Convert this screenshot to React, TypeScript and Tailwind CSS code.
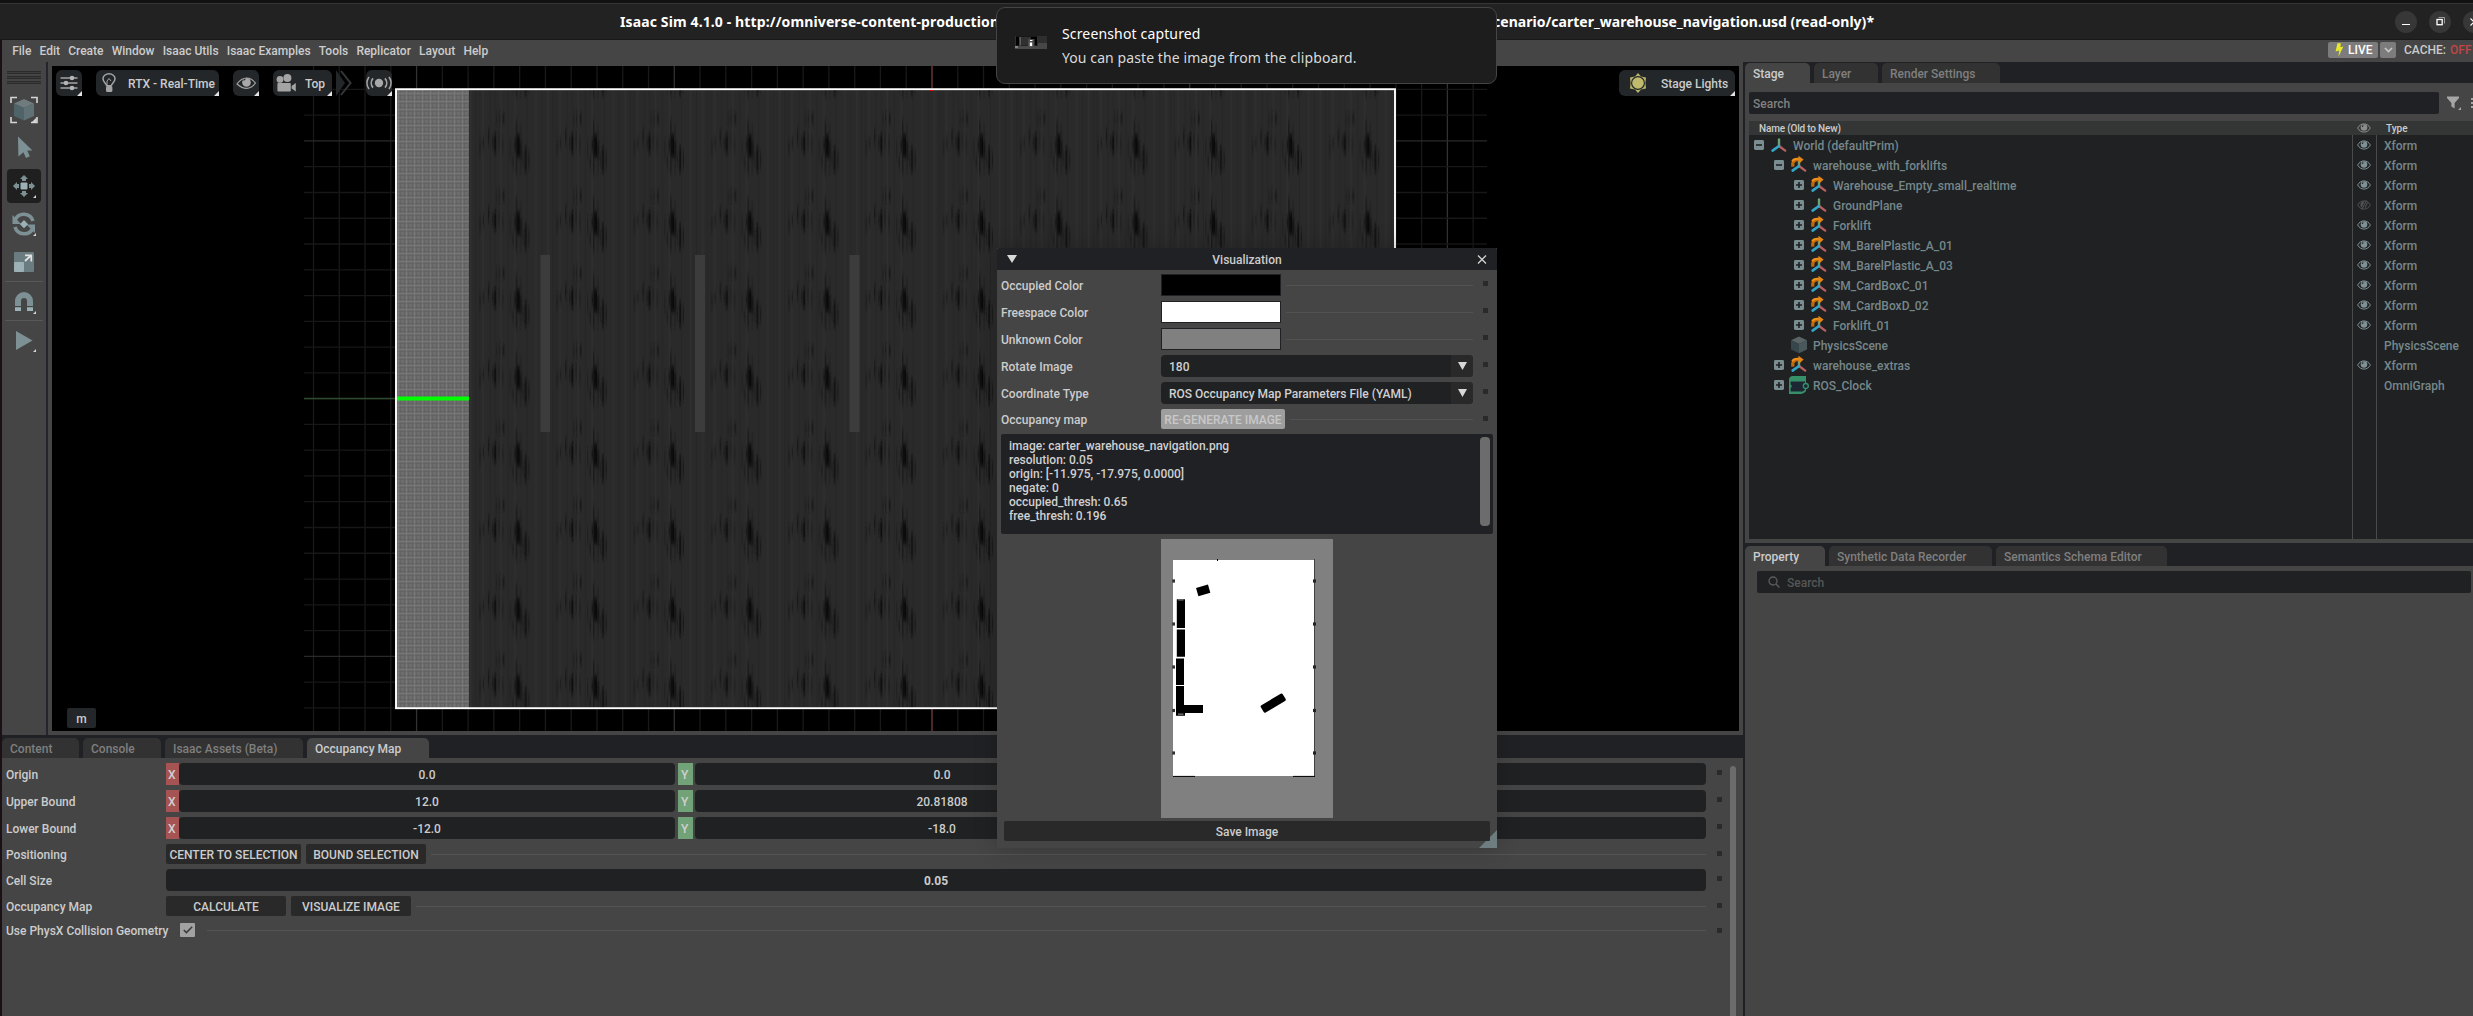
import type { ReactNode } from 'react';

/* ---------- shared bits ---------- */

const Corner = ({ className = '' }: { className?: string }) => (
  <svg className={`absolute right-0 bottom-0 ${className}`} width="5" height="5" viewBox="0 0 5 5">
    <path d="M5 0V5H0Z" fill="#e4e4e4" />
  </svg>
);

const Tab = ({ children, className, active }: { children: ReactNode; className: string; active?: boolean }) => (
  <div
    className={`flex shrink-0 items-center rounded-t-[5px] pl-2 ${
      active ? 'bg-[#454545] text-[#cccccc]' : 'bg-[#323232] text-[#7f7f7f]'
    } ${className}`}
  >
    {children}
  </div>
);

const Marker = () => <div className="size-[5px] shrink-0 bg-[#2a2a2a]" />;

const Eye = ({ color = '#7f9194' }: { color?: string }) => (
  <svg width="14" height="10" viewBox="0 0 14 10" fill="none">
    <path d="M0.6 5C2.3 2.2 4.4 0.9 7 0.9S11.7 2.2 13.4 5C11.7 7.8 9.6 9.1 7 9.1S2.3 7.8 0.6 5Z" stroke={color} strokeWidth="1" />
    <circle cx="7" cy="4.5" r="3.3" fill={color} />
    <path d="M6.4 2.4A2 2 0 0 0 5.2 4" stroke="#26292b" strokeWidth="1.1" />
  </svg>
);

const EyeOff = () => (
  <svg width="14" height="10" viewBox="0 0 14 10" fill="none">
    <path d="M0.6 5C2.3 2.2 4.4 0.9 7 0.9S11.7 2.2 13.4 5C11.7 7.8 9.6 9.1 7 9.1S2.3 7.8 0.6 5Z" stroke="#525252" strokeWidth="1" />
    <path d="M7.6 1.2A3.6 3.6 0 0 0 4.6 7.4Z" fill="#525252" />
    <path d="M9.6 0.4L4.6 9.6M10.6 2.6L8 7.8" stroke="#525252" strokeWidth="1.1" />
  </svg>
);

/* ---------- title bar ---------- */

const WindowButton = ({ children }: { children: ReactNode }) => (
  <div className="flex size-[22px] shrink-0 items-center justify-center rounded-full bg-[#373737]">{children}</div>
);

function TitleBar() {
  return (
    <div className="flex h-[40px] shrink-0 flex-col bg-[#222222]">
      <div className="h-[3px] bg-[#111111]" />
      <div className="h-px bg-[#363636]" />
      <div className="flex h-[35px] items-center overflow-hidden">
        <div className="ml-[620px] flex w-[1254px] shrink-0 justify-between text-[14px] leading-[20px] font-bold whitespace-nowrap text-white [font-family:'Noto_Sans',sans-serif]">
          <span className="tracking-[0.12px]">Isaac Sim 4.1.0 - http://omniverse-content-production</span>
          <span className="tracking-[0.02px]">cenario/carter_warehouse_navigation.usd (read-only)*</span>
        </div>
        <div className="ml-[521px] flex gap-3">
          <WindowButton>
            <div className="mt-[5px] h-px w-2 bg-white" />
          </WindowButton>
          <WindowButton>
            <svg width="9" height="9" viewBox="0 0 9 9" fill="none">
              <path d="M2.5 0.5H8.5V6.5" stroke="#9a9a9a" />
              <rect x="1" y="2.5" width="5.2" height="5.2" stroke="#fff" strokeWidth="1.3" />
            </svg>
          </WindowButton>
          <WindowButton>
            <svg width="8" height="8" viewBox="0 0 8 8">
              <path d="M0.5 0.5L7.5 7.5M7.5 0.5L0.5 7.5" stroke="#fff" strokeWidth="1.2" />
            </svg>
          </WindowButton>
        </div>
      </div>
      <div className="h-px bg-[#191919]" />
    </div>
  );
}

const MENUS = ['File', 'Edit', 'Create', 'Window', 'Isaac Utils', 'Isaac Examples', 'Tools', 'Replicator', 'Layout', 'Help'];

function MenuBar() {
  return (
    <div className="flex h-[22px] shrink-0 items-center justify-between bg-[#454545]">
      <div className="flex gap-[8.2px] pl-[10.2px]">
        {MENUS.map((m) => (
          <span key={m}>{m}</span>
        ))}
      </div>
      <div className="flex h-full w-[145px] shrink-0 items-start pt-[2px] leading-[17px] whitespace-nowrap">
        <div className="flex h-4 w-[50px] items-center rounded-[2px] bg-[#7c7c7c] pl-[7px] text-white">
          <svg width="9" height="14" viewBox="0 0 9 14">
            <path d="M2.4 0.3H5.8L5.4 4.2L8.4 3.6L3.4 13.8L4.2 7.6L0.6 8.4Z" fill="#e8e82a" />
          </svg>
          <span className="pl-[4px]">LIVE</span>
        </div>
        <div className="ml-[2px] flex h-4 w-4 items-center justify-center rounded-[2px] bg-[#7c7c7c]">
          <svg width="9" height="6" viewBox="0 0 9 6" fill="none">
            <path d="M1 1L4.5 4.6L8 1" stroke="#c8c8c8" strokeWidth="1.6" />
          </svg>
        </div>
        <span className="ml-2">CACHE:</span>
        <span className="ml-[4px] text-[#c04545]">OFF</span>
      </div>
    </div>
  );
}

/* ---------- tool strip ---------- */

const Tool = ({ children, className = '', active }: { children: ReactNode; className?: string; active?: boolean }) => (
  <div className={`size-[34px] shrink-0 ${active ? 'rounded-[4px] bg-[#1f1f1f]' : ''} ${className}`}>
    <svg width="34" height="34" viewBox="0 0 34 34" fill="none">
      {children}
    </svg>
  </div>
);

const tip = 'M29 26V29H26Z';

function ToolStrip() {
  return (
    <div className="flex w-[44px] shrink-0 flex-col items-center bg-[#454545] pt-[9px]">
      <div className="flex h-[13px] w-[34px] flex-col justify-between">
        <div className="h-[3px] border-y border-y-[#2b2b2b] bg-[#3c3c3c]" />
        <div className="h-[3px] border-y border-y-[#2b2b2b] bg-[#3c3c3c]" />
        <div className="h-[3px] border-y border-y-[#2b2b2b] bg-[#3c3c3c]" />
      </div>
      <Tool className="mt-[9px]">
        <path d="M4 10V4.5H10M24 4.5H30V10M30 24V29.5H24M10 29.5H4V24" stroke="#d6d6d6" strokeWidth="1.6" />
        <path d="M17 6L27 10.5L17 15L7 10.5Z" fill="#6f7b7d" />
        <path d="M7 10.5L17 15V27.5L7 23Z" fill="#4f6468" />
        <path d="M27 10.5L17 15V27.5L27 23Z" fill="#617277" />
        <path d="M29.5 24.5V29H25Z" fill="#d6d6d6" />
      </Tool>
      <Tool className="mt-[3px]">
        <path d="M11 6.5L25.5 20.5H20.2L22.8 26.2L19 28L16.4 22.2L11.4 26.6Z" fill="#7d9195" />
      </Tool>
      <Tool className="mt-[5px]" active>
        <rect x="13.5" y="13.5" width="7" height="7" rx="1" fill="#9cb1b6" />
        <path
          d="M17 6L21 10H19V12H15V10H13ZM17 28L21 24H19V22H15V24H13ZM6 17L10 13V15H12V19H10V21ZM28 17L24 13V15H22V19H24V21Z"
          fill="#7d9195"
        />
        <path d={tip} fill="#d6d6d6" />
      </Tool>
      <Tool className="mt-1">
        <path d="M8 13A9.6 9.6 0 0 1 26 14M26 21A9.6 9.6 0 0 1 8 20" stroke="#7d9195" strokeWidth="3.6" />
        <path d="M5.5 8V17H14ZM28 26V17.5H19.5Z" fill="#7d9195" />
        <rect x="14.2" y="14.2" width="5.8" height="5.8" transform="rotate(45 17 17)" fill="#9cb1b6" />
        <path d="M29 26V29H26Z" fill="#d6d6d6" />
      </Tool>
      <Tool className="mt-1">
        <rect x="7" y="7" width="20" height="20" rx="1" fill="#6b7c80" />
        <rect x="7" y="17" width="10" height="10" rx="1" fill="#9cb1b6" />
        <path d="M18 10.3H24.3V16.5M24 10.5L18 16" stroke="#e2e2e2" strokeWidth="1.7" />
      </Tool>
      <div className="mt-[2px] h-px w-[38px] bg-[#585858]" />
      <Tool className="mt-[3px]">
        <path d="M8 21V16A9 9 0 0 1 26 16V21H20V16A3 3 0 0 0 14 16V21Z" fill="#7d9195" />
        <path d="M8 22.3H14V26H8ZM20 22.3H26V26H20Z" fill="#9cb1b6" />
        <path d={tip} fill="#d6d6d6" />
      </Tool>
      <div className="mt-px h-px w-[38px] bg-[#585858]" />
      <Tool className="mt-[3px]">
        <path d="M9 7L25.5 16.5L9 26Z" fill="#7d9195" />
        <path d="M29 25V28H26Z" fill="#d6d6d6" />
      </Tool>
    </div>
  );
}

/* ---------- viewport ---------- */

const V0 = 313.5 - 52;
const H0 = 89.4 - 66;
const STEP = 25.77;

/* Coordinates of the scene are local to the viewport. */
function Scene() {
  const vs = Array.from({ length: 46 }, (_, i) => ({ x: V0 + i * STEP, major: i % 10 === 4 }));
  const hs = Array.from({ length: 25 }, (_, i) => ({ y: H0 + i * STEP, major: i % 10 === 2 }));
  return (
    <svg className="absolute inset-0" width="1687" height="665" viewBox="0 0 1687 665">
      <defs>
        <pattern id="weave" width="8" height="8" patternUnits="userSpaceOnUse">
          <rect width="8" height="8" fill="#6d6d6d" />
          <path d="M0.5 0V8M4.5 0V8M0 1.5H8M0 5.5H8" stroke="#636363" strokeWidth="1" />
          <path d="M2.5 0V8M0 3.5H8" stroke="#767676" strokeWidth="1" />
        </pattern>
        <filter id="soft" filterUnits="userSpaceOnUse" x="0" y="0" width="78" height="78">
          <feGaussianBlur stdDeviation="0.5 2.6" />
        </filter>
        <pattern id="floor" x="426" y="36" width="77.25" height="77.3" patternUnits="userSpaceOnUse">
          <rect width="77.25" height="77.3" fill="#2a2a2a" />
          <path d="M5 0V78M23 0V78M37 0V78M58 0V78M70 0V78" stroke="#2f2f2f" strokeWidth="1.5" />
          <path d="M1 0V78M12 0V78M17 0V78M30 0V78M49 0V78M64 0V78M75 0V78" stroke="#252525" strokeWidth="1" />
          <g filter="url(#soft)" fill="none">
            <path d="M38.4 18V72" stroke="#1b1b1b" strokeWidth="1.3" />
            <path d="M42.6 24V70" stroke="#1c1c1c" strokeWidth="1.2" />
            <path d="M40 33V55" stroke="#070707" strokeWidth="2.8" />
            <path d="M37 37V49M43.2 40V56" stroke="#121212" strokeWidth="1.6" />
            <path d="M47.6 45V70" stroke="#0b0b0b" strokeWidth="1.6" />
            <path d="M50.8 50V66M45.2 52V64" stroke="#1b1b1b" strokeWidth="1.2" />
            <path d="M32.5 38V56M35.2 54V66" stroke="#1f1f1f" strokeWidth="1.3" />
            <path d="M17.2 32V51" stroke="#111111" strokeWidth="2.2" />
            <path d="M14.8 36V46" stroke="#181818" strokeWidth="1.6" />
            <path d="M10.6 28V42" stroke="#151515" strokeWidth="1.3" />
            <path d="M21 30V46M24.6 36V50" stroke="#1f1f1f" strokeWidth="1.2" />
            <path d="M25.5 12V21" stroke="#161616" strokeWidth="1.6" />
            <path d="M21.5 10V24M18.6 12V24" stroke="#1f1f1f" strokeWidth="1.2" />
            <path d="M2 38V52M5.5 36V46" stroke="#1e1e1e" strokeWidth="1.3" />
          </g>
          <circle cx="40.2" cy="57.6" r="1.5" fill="#242424" />
        </pattern>
      </defs>
      {vs.map(({ x, major }) => (
        <path key={x} d={`M${x} 0V665`} stroke={major ? '#323232' : '#191919'} strokeWidth="1.3" />
      ))}
      {hs.map(({ y, major }) => (
        <path key={y} d={`M252 ${y}H1435`} stroke={major ? '#2a2a2a' : '#171717'} strokeWidth="1.3" />
      ))}
      <path d="M880 0V665" stroke="#5a2a2a" strokeWidth="1.6" />
      <path d="M252 332.5H1435" stroke="#2c4a2c" strokeWidth="1.6" />
      <rect x="344" y="23" width="73" height="619" fill="url(#weave)" />
      <rect x="417" y="23" width="926" height="619" fill="url(#floor)" />
      <path d="M488.5 189H498V366H488.5ZM643 189H653V366H643ZM797.5 189H807.5V366H797.5Z" fill="#3c3c3c" />
      <path d="M345 332.5H417" stroke="#00ff00" strokeWidth="4" />
      <rect x="344" y="23.2" width="999" height="619" stroke="#ffffff" strokeWidth="1.9" fill="none" />
      <rect x="878" y="24" width="4" height="1" fill="#ff0000" />
    </svg>
  );
}

const ViewButton = ({ children, className }: { children: ReactNode; className: string }) => (
  <div className={`relative flex h-[26px] shrink-0 items-center rounded-[6px] bg-[#23272a] ${className}`}>
    {children}
    <Corner />
  </div>
);

function Viewport() {
  return (
    <div className="relative flex min-w-0 flex-1 flex-col justify-between overflow-hidden bg-black">
      <Scene />
      <div className="relative flex items-start px-1 pt-1">
        <ViewButton className="w-[26px] justify-center">
          <svg width="18" height="16" viewBox="0 0 18 16" fill="none">
            <path d="M0.5 3H17.5M0.5 8H17.5M0.5 13H17.5" stroke="#a4a4a4" strokeWidth="1.7" />
            <circle cx="12" cy="3" r="2.3" fill="#b4b4b4" />
            <circle cx="6" cy="8" r="2.3" fill="#b4b4b4" />
            <circle cx="12" cy="13" r="2.3" fill="#b4b4b4" />
          </svg>
        </ViewButton>
        <ViewButton className="ml-[14px] w-[123px]">
          <svg className="ml-[6px]" width="14" height="20" viewBox="0 0 14 20" fill="none">
            <path d="M4.6 12.8C4.4 10.4 1 9.2 1 5.8A6 5 0 0 1 13 5.8C13 9.2 9.6 10.4 9.4 12.8Z" stroke="#a4a4a4" strokeWidth="1.5" />
            <path d="M5 12V8L7 5.5L9 8" stroke="#a4a4a4" strokeWidth="1" />
            <rect x="4" y="13" width="6.4" height="6" rx="1.6" fill="#a4a4a4" />
          </svg>
          <span className="ml-[12px] pt-[2px] whitespace-nowrap">RTX - Real-Time</span>
        </ViewButton>
        <ViewButton className="ml-[14px] w-[26px] justify-center">
          <svg width="20" height="14" viewBox="0 0 20 14" fill="none">
            <path d="M1 8C4 3.8 7 2 10.5 2C14 2 17 3.8 19.4 7C16.8 10.8 14 12.4 10.5 12.4C6.8 12.4 4 10.6 1 8Z" stroke="#a4a4a4" strokeWidth="1.2" />
            <circle cx="10.5" cy="6.4" r="4.3" fill="#a8a8a8" />
            <path d="M7.6 4.6A3 3 0 0 1 9.4 3" stroke="#23272a" strokeWidth="1.2" />
          </svg>
        </ViewButton>
        <ViewButton className="ml-[14px] w-[59px]">
          <svg className="ml-[2px]" width="22" height="20" viewBox="0 0 22 20">
            <circle cx="5" cy="6.4" r="3.4" fill="#a4a4a4" />
            <circle cx="12.4" cy="5" r="4" fill="#a4a4a4" />
            <rect x="2.4" y="10" width="13.4" height="8.6" rx="1" fill="#a4a4a4" />
            <path d="M20.8 10V18.6L16.6 15.6V13Z" fill="#a4a4a4" />
          </svg>
          <span className="ml-[8px] pt-[2px]">Top</span>
        </ViewButton>
        <svg className="ml-[4px]" width="16" height="26" viewBox="0 0 16 26" fill="none">
          <path d="M0 0L9 13L0 26Z" fill="#23272a" />
          <path d="M5 1L14.5 13L5 25" stroke="#33383b" strokeWidth="2" />
        </svg>
        <ViewButton className="ml-[14px] w-[26px] justify-center">
          <svg width="26" height="16" viewBox="0 0 26 16" fill="none">
            <circle cx="13" cy="8" r="4.2" fill="#a8a8a8" />
            <path d="M7 3.4A7 7 0 0 0 7 12.6M19 3.4A7 7 0 0 1 19 12.6M3 2A10 10 0 0 0 3 14M23 2A10 10 0 0 1 23 14" stroke="#a4a4a4" strokeWidth="1.7" />
          </svg>
        </ViewButton>
        <ViewButton className="ml-auto w-[116px]">
          <svg className="ml-[9px]" width="20" height="20" viewBox="0 0 20 20">
            <path d="M10 0L13 3.4L18 4.6L17.4 10L18 15.4L13 16.6L10 20L7 16.6L2 15.4L2.6 10L2 4.6L7 3.4Z" fill="#b9b56a" />
            <circle cx="10" cy="10" r="7" fill="#23272a" />
            <circle cx="10" cy="10" r="5.8" fill="#bfba6c" />
          </svg>
          <span className="ml-[13px] pt-[2px] whitespace-nowrap">Stage Lights</span>
        </ViewButton>
      </div>
      <div className="relative mb-[3px] ml-[15px] flex h-5 w-[29px] items-center justify-center rounded-[2px] bg-[#23272a] pt-[2px]">m</div>
    </div>
  );
}

/* ---------- bottom panel ---------- */

const Field = ({ children, className = '' }: { children?: ReactNode; className?: string }) => (
  <div className={`flex h-[22px] items-center justify-center rounded-[4px] bg-[#1f2123] pt-[2px] ${className}`}>{children}</div>
);

const Axis = ({ children, className }: { children: ReactNode; className: string }) => (
  <div className={`flex h-[22px] shrink-0 items-center pt-[2px] text-[#d0d0d0] ${className}`}>{children}</div>
);

const BOUNDS = [
  ['Origin', '0.0', '0.0'],
  ['Upper Bound', '12.0', '20.81808'],
  ['Lower Bound', '-12.0', '-18.0'],
];

const Row = ({ label, children, className }: { label: string; children: ReactNode; className: string }) => (
  <div className={`flex shrink-0 items-center ${className}`}>
    <span className="w-[160px] shrink-0 pt-[2px] whitespace-nowrap">{label}</span>
    <div className="flex min-w-0 flex-1 items-center">{children}</div>
    <div className="ml-[11px] self-start pt-[7px]">
      <Marker />
    </div>
  </div>
);

const Button = ({ children, className }: { children: ReactNode; className: string }) => (
  <div className={`flex h-5 shrink-0 items-center justify-center rounded-[2px] bg-[#292929] pt-px whitespace-nowrap ${className}`}>
    {children}
  </div>
);

const Rule = ({ className = '' }: { className?: string }) => <div className={`h-px flex-1 bg-[#515655] ${className}`} />;

function OccupancyPanel() {
  return (
    <div className="flex h-[281px] shrink-0 flex-col bg-[#454545]">
      <div className="flex h-[23px] shrink-0 gap-1 bg-[#202124] pt-[3px]">
        <Tab className="w-[77px] pt-[2px]">Content</Tab>
        <Tab className="w-[78px] pt-[2px]">Console</Tab>
        <Tab className="w-[138px] pt-[2px]">Isaac Assets (Beta)</Tab>
        <Tab className="w-[122px] pt-[2px]" active>
          Occupancy Map
        </Tab>
      </div>
      <div className="flex min-h-0 flex-1 pl-[4px]">
        <div className="flex w-[1716px] shrink-0 flex-col pt-[5px]">
          {BOUNDS.map(([label, x, y]) => (
            <Row key={label} label={label} className="mb-[5px] h-[22px]">
              <Axis className="w-[13px] bg-[#a65353] pl-[2px]">X</Axis>
              <Field className="w-[496px]">{x}</Field>
              <Axis className="ml-[3px] w-[15px] bg-[#72a278] pl-[3px]">Y</Axis>
              <Field className="ml-[2px] w-[494px]">{y}</Field>
              <Axis className="ml-[3px] w-[15px] bg-[#4f7da0] pl-[4px]">Z</Axis>
              <Field className="ml-[2px] flex-1" />
            </Row>
          ))}
          <Row label="Positioning" className="mb-[5px] h-5">
            <Button className="w-[135px]">CENTER TO SELECTION</Button>
            <Button className="ml-[5px] w-[120px]">BOUND SELECTION</Button>
            <Rule className="ml-[5px]" />
          </Row>
          <Row label="Cell Size" className="mb-[5px] h-[22px]">
            <Field className="flex-1 font-bold">0.05</Field>
          </Row>
          <Row label="Occupancy Map" className="mb-[5px] h-5">
            <Button className="w-[120px]">CALCULATE</Button>
            <Button className="ml-[5px] w-[120px]">VISUALIZE IMAGE</Button>
            <Rule className="ml-[5px]" />
          </Row>
          <Row label="Use PhysX Collision Geometry" className="h-[18px]">
            <div className="ml-[14px] flex h-[14px] w-[15px] shrink-0 items-center justify-center rounded-[1px] bg-[#a2a2a2]">
              <svg width="10" height="8" viewBox="0 0 10 8" fill="none">
                <path d="M0.8 4L3.4 6.6L9.2 0.8" stroke="#3a3a3a" strokeWidth="1.5" />
              </svg>
            </div>
            <Rule className="ml-[12px]" />
          </Row>
        </div>
        <div className="mt-[8px] ml-[8px] w-[6px] rounded-t-[3px] bg-[#6c6c6c]" />
      </div>
    </div>
  );
}

/* ---------- stage tree ---------- */

const XformIcon = ({ reference }: { reference?: boolean }) => (
  <svg width="20" height="20" viewBox="0 0 20 20" fill="none" className="shrink-0">
    <path d="M10 4.4V11" stroke="#6aa374" strokeWidth="2.4" strokeLinecap="round" />
    <path d="M10 11L16.2 15.6" stroke="#b85f60" strokeWidth="2.4" strokeLinecap="round" />
    <path d="M10 11L3.6 15.6" stroke="#35a5c8" strokeWidth="2.6" strokeLinecap="round" />
    {reference && (
      <>
        <path d="M3.8 11.6C3.2 6.6 5 4.4 10 4.6" stroke="#c26a0c" strokeWidth="3.2" />
        <path d="M3.2 6.4C4.4 3.8 6.4 3.4 10 3.8" stroke="#f0921e" strokeWidth="2" />
        <path d="M9.4 0.8L14.6 4.6L9.8 9Z" fill="#e5861a" />
      </>
    )}
  </svg>
);

const CubeIcon = () => (
  <svg width="20" height="20" viewBox="0 0 20 20" className="shrink-0">
    <path d="M10 1.6L18 5.2L10 9L2 5.2Z" fill="#5a6467" />
    <path d="M2 5.2L10 9V18.2L2 14.4Z" fill="#36464b" />
    <path d="M18 5.2L10 9V18.2L18 14.4Z" fill="#4a585c" />
  </svg>
);

const GraphIcon = () => (
  <svg width="20" height="20" viewBox="0 0 20 20" className="shrink-0" fill="none">
    <path d="M0 5Q0 1 4 1H17V16Q15 19 12 19H0Z" fill="#36916b" />
    <path d="M1.6 6.6H16V14.6Q14.6 17 12 16.6H1.6V13A2 2 0 0 0 1.6 9.4Z" fill="#1c2733" />
    <circle cx="16.8" cy="11" r="2.5" fill="#1c2733" stroke="#36916b" strokeWidth="1.3" />
  </svg>
);

const Expander = ({ open }: { open?: boolean }) => (
  <svg width="10" height="10" viewBox="0 0 10 10" className="shrink-0">
    <rect width="10" height="10" rx="1.4" fill="#7a8d91" />
    <path d={open ? 'M2 5H8' : 'M2 5H8M5 2V8'} stroke="#1f2123" strokeWidth="1.6" />
  </svg>
);

type Prim = { name: string; depth: 0 | 1 | 2; kind: 'xform' | 'ref' | 'cube' | 'graph'; toggle?: 'open' | 'closed'; eye?: 'on' | 'off'; type: string };

const PRIMS: Prim[] = [
  { name: 'World (defaultPrim)', depth: 0, kind: 'xform', toggle: 'open', eye: 'on', type: 'Xform' },
  { name: 'warehouse_with_forklifts', depth: 1, kind: 'ref', toggle: 'open', eye: 'on', type: 'Xform' },
  { name: 'Warehouse_Empty_small_realtime', depth: 2, kind: 'ref', toggle: 'closed', eye: 'on', type: 'Xform' },
  { name: 'GroundPlane', depth: 2, kind: 'xform', toggle: 'closed', eye: 'off', type: 'Xform' },
  { name: 'Forklift', depth: 2, kind: 'ref', toggle: 'closed', eye: 'on', type: 'Xform' },
  { name: 'SM_BarelPlastic_A_01', depth: 2, kind: 'ref', toggle: 'closed', eye: 'on', type: 'Xform' },
  { name: 'SM_BarelPlastic_A_03', depth: 2, kind: 'ref', toggle: 'closed', eye: 'on', type: 'Xform' },
  { name: 'SM_CardBoxC_01', depth: 2, kind: 'ref', toggle: 'closed', eye: 'on', type: 'Xform' },
  { name: 'SM_CardBoxD_02', depth: 2, kind: 'ref', toggle: 'closed', eye: 'on', type: 'Xform' },
  { name: 'Forklift_01', depth: 2, kind: 'ref', toggle: 'closed', eye: 'on', type: 'Xform' },
  { name: 'PhysicsScene', depth: 1, kind: 'cube', type: 'PhysicsScene' },
  { name: 'warehouse_extras', depth: 1, kind: 'ref', toggle: 'closed', eye: 'on', type: 'Xform' },
  { name: 'ROS_Clock', depth: 1, kind: 'graph', toggle: 'closed', type: 'OmniGraph' },
];

const INDENT = ['pl-[5px]', 'pl-[25px]', 'pl-[45px]'];

function StagePanel() {
  return (
    <div className="flex h-[481px] shrink-0 flex-col">
      <div className="flex h-[21px] shrink-0 gap-1 bg-[#202124] pt-px">
        <Tab className="w-[65px] pt-[2px]" active>
          Stage
        </Tab>
        <Tab className="w-[64px] pt-[2px]">Layer</Tab>
        <Tab className="w-[118px] pt-[2px]">Render Settings</Tab>
      </div>
      <div className="flex shrink-0 items-center pt-[9px] pl-1">
        <div className="flex h-[22px] w-[691px] items-center rounded-[2px] bg-[#202124] pt-[2px] pl-1 text-[#808080]">Search</div>
        <svg className="ml-[8px] shrink-0" width="14" height="14" viewBox="0 0 14 14">
          <path d="M0 0.5H12V2L7.6 7V12.6L4.4 10.4V7L0 2Z" fill="#a6a6a6" />
          <path d="M14 11V14H11Z" fill="#a6a6a6" />
        </svg>
        <div className="ml-[10px] flex flex-col gap-[2px]">
          <div className="size-[2px] bg-[#a6a6a6]" />
          <div className="size-[2px] bg-[#a6a6a6]" />
          <div className="size-[2px] bg-[#a6a6a6]" />
        </div>
      </div>
      <div className="mt-[7px] ml-1 flex h-[14px] shrink-0 items-center bg-[#343635] text-[10px]">
        <span className="w-[608px] pt-[2px] pl-[10px] tracking-[-0.18px]">Name (Old to New)</span>
        <div className="-mt-px">
          <Eye color="#8c8c8c" />
        </div>
        <span className="ml-[15px] pt-[2px]">Type</span>
      </div>
      <div className="ml-1 flex min-h-0 flex-1 bg-[#1f2123] text-[#76878a]">
        <div className="w-[603px] shrink-0">
          {PRIMS.map((p) => (
            <div key={p.name} className={`flex h-5 items-center ${INDENT[p.depth]}`}>
              {p.toggle ? <Expander open={p.toggle === 'open'} /> : <div className="w-[10px]" />}
              <div className="ml-[5px]">
                {p.kind === 'cube' ? <CubeIcon /> : p.kind === 'graph' ? <GraphIcon /> : <XformIcon reference={p.kind === 'ref'} />}
              </div>
              <span className="ml-1 pt-[2px] whitespace-nowrap">{p.name}</span>
            </div>
          ))}
        </div>
        <div className="w-[25px] shrink-0 border-x border-[#4a4a4a]">
          {PRIMS.map((p) => (
            <div key={p.name} className="flex h-5 items-center pl-[4px]">
              {p.eye === 'on' ? <Eye /> : p.eye === 'off' ? <EyeOff /> : null}
            </div>
          ))}
        </div>
        <div className="flex-1 pl-[7px]">
          {PRIMS.map((p) => (
            <div key={p.name} className="flex h-5 items-center pt-[2px]">
              {p.type}
            </div>
          ))}
        </div>
      </div>
      <div className="h-1 shrink-0" />
    </div>
  );
}

function PropertyPanel() {
  return (
    <div className="flex min-h-0 flex-1 flex-col">
      <div className="flex h-[23px] shrink-0 gap-1 bg-[#202124] pt-[3px]">
        <Tab className="w-[80px] pt-[2px]" active>
          Property
        </Tab>
        <Tab className="w-[163px] pt-[2px]">Synthetic Data Recorder</Tab>
        <Tab className="w-[171px] pt-[2px]">Semantics Schema Editor</Tab>
      </div>
      <div className="mt-[5px] ml-3 flex h-[22px] w-[714px] items-center rounded-[2px] bg-[#1f2123] pl-[11px] text-[#565656]">
        <svg width="12" height="12" viewBox="0 0 12 12" fill="none">
          <circle cx="5" cy="5" r="4" stroke="#5c5c5c" strokeWidth="1.3" />
          <path d="M8 8L11.4 11.4" stroke="#5c5c5c" strokeWidth="1.4" />
        </svg>
        <span className="pt-[2px] pl-[7px]">Search</span>
      </div>
    </div>
  );
}

/* ---------- floating windows ---------- */

const VizRow = ({ label, children, className = 'h-[22px]' }: { label: string; children: ReactNode; className?: string }) => (
  <div className={`mb-[5px] flex shrink-0 items-center ${className}`}>
    <span className="w-[160px] shrink-0 pt-[2px]">{label}</span>
    <div className="flex w-[312px] items-center">{children}</div>
    <div className="ml-[10px] self-start pt-[7px]">
      <Marker />
    </div>
  </div>
);

const Combo = ({ children }: { children: ReactNode }) => (
  <div className="flex h-[22px] flex-1 items-center justify-between overflow-hidden rounded-[4px] bg-[#1f2123] pl-2">
    <span className="pt-[2px] text-[#d0d0d0]">{children}</span>
    <div className="flex h-full w-[22px] items-center justify-center bg-[#292929]">
      <svg width="9" height="8" viewBox="0 0 9 8">
        <path d="M0 0H9L4.5 8Z" fill="#d8d8d8" />
      </svg>
    </div>
  </div>
);

const Swatch = ({ className }: { className: string }) => (
  <>
    <div className={`h-[22px] w-[120px] border border-[#202124] ${className}`} />
    <div className="ml-[5px] h-px flex-1 bg-[#525252]" />
  </>
);

const YAML = [
  'image: carter_warehouse_navigation.png',
  'resolution: 0.05',
  'origin: [-11.975, -17.975, 0.0000]',
  'negate: 0',
  'occupied_thresh: 0.65',
  'free_thresh: 0.196',
];

function OccupancyMap() {
  return (
    <svg width="172" height="279" viewBox="0 0 172 279">
      <rect width="172" height="279" fill="#808080" />
      <rect x="12" y="21" width="141" height="216" fill="#fff" />
      <path d="M153.5 20V238" stroke="#3a3a3a" strokeWidth="0.9" />
      <path d="M12 237.4H34M132 237.4H154M56.5 20V22" stroke="#000" strokeWidth="1" />
      {[42, 85, 128, 171.5, 214].map((y) => (
        <g key={y}>
          <rect x="11.2" y={y - 1.6} width="2.8" height="3.2" fill="#333" />
          <rect x="152" y={y - 1.6} width="3" height="3.2" fill="#222" />
        </g>
      ))}
      <rect x="36" y="47.2" width="12.4" height="8.6" transform="rotate(-16 42 51.5)" fill="#000" />
      <path d="M15.8 60.3H24V89H15.8ZM15.8 90.5H24V117.7H15.8ZM15 119.6H23V146H15ZM15 147H23V166H42V174H24V176.8H15Z" fill="#000" />
      <path d="M17 61H22.5M17 175.2H22.5" stroke="#808080" strokeWidth="1.2" />
      <rect x="99.5" y="160" width="25.5" height="8.4" rx="1.5" transform="rotate(-31 112 164.2)" fill="#000" />
    </svg>
  );
}

function VisualizationWindow() {
  return (
    <div className="absolute top-[248px] left-[997px] flex h-[600px] w-[500px] flex-col bg-[#454545] shadow-[0_0_22px_rgba(0,0,0,0.2)]">
      <div className="flex h-[22px] shrink-0 items-center justify-between rounded-t-[2px] bg-[#202124] px-[10px]">
        <svg width="10" height="8" viewBox="0 0 10 8">
          <path d="M0 0H10L5 8Z" fill="#d8d8d8" />
        </svg>
        <span className="pt-[2px]">Visualization</span>
        <svg width="10" height="9" viewBox="0 0 10 9">
          <path d="M1 0.5L9 8.5M9 0.5L1 8.5" stroke="#d8d8d8" strokeWidth="1.2" />
        </svg>
      </div>
      <div className="flex flex-col pt-1 pl-1">
        <VizRow label="Occupied Color">
          <Swatch className="bg-black" />
        </VizRow>
        <VizRow label="Freespace Color">
          <Swatch className="bg-white" />
        </VizRow>
        <VizRow label="Unknown Color">
          <Swatch className="bg-[#808080]" />
        </VizRow>
        <VizRow label="Rotate Image">
          <Combo>180</Combo>
        </VizRow>
        <VizRow label="Coordinate Type">
          <Combo>ROS Occupancy Map Parameters File (YAML)</Combo>
        </VizRow>
        <VizRow label="Occupancy map" className="h-5">
          <div className="flex h-5 w-[124px] items-center justify-center rounded-[2px] bg-[#9e9e9e] pt-[2px] whitespace-nowrap text-[#c8c8c8]">
            RE-GENERATE IMAGE
          </div>
          <div className="ml-[5px] h-px flex-1 bg-[#525252]" />
        </VizRow>
        <div className="flex h-[100px] w-[492px] justify-between rounded-[2px] bg-[#202124] pt-[3px] pr-[3px] pl-2">
          <div className="pt-[2px] leading-[14px] text-[#d0d0d0]">
            {YAML.map((l) => (
              <p key={l}>{l}</p>
            ))}
          </div>
          <div className="h-[89px] w-[10px] rounded-[4px] bg-[#6c6c6c]" />
        </div>
        <div className="mt-[5px] ml-[160px]">
          <OccupancyMap />
        </div>
        <div className="mt-[3px] ml-[3px] flex h-5 w-[486px] items-center justify-center rounded-[2px] bg-[#292929] pt-[2px]">Save Image</div>
      </div>
      <svg className="absolute right-0 bottom-0" width="18" height="18" viewBox="0 0 18 18">
        <path d="M18 0V18H0L7 11H11V7Z" fill="#6d7d80" />
      </svg>
    </div>
  );
}

function Notification() {
  return (
    <div className="absolute top-[7px] left-[996px] flex h-[77px] w-[501px] rounded-[9px] border border-[#454545] bg-[#1d1d1d] text-[14px] [font-family:'Noto_Sans',sans-serif]">
      <svg className="mt-[28px] ml-[18px] shrink-0" width="32" height="13" viewBox="0 0 32 13">
        <rect width="32" height="13" fill="#2c2e30" />
        <rect x="1" y="0.5" width="21" height="9" fill="#000" />
        <rect x="5" y="1" width="11" height="8.5" fill="#303030" />
        <rect x="4.5" y="1" width="1" height="8.5" fill="#8a8a8a" />
        <rect x="0" y="10" width="32" height="3" fill="#4a4a4a" />
        <rect x="23" y="7" width="9" height="6" fill="#474747" />
        <rect x="13" y="3" width="6.5" height="8" fill="#4a4a4a" />
        <rect x="14.8" y="6.5" width="2.4" height="3.6" fill="#fff" />
        <rect x="15" y="4" width="2.4" height="1" fill="#fff" />
        <path d="M0 11H3" stroke="#bbb" strokeWidth="1" />
      </svg>
      <div className="ml-[15px] pt-[14px] font-normal whitespace-nowrap">
        <p className="leading-[24px] tracking-[0.15px] text-white">Screenshot captured</p>
        <p className="leading-[24px] tracking-[0.09px] text-[#dadada]">You can paste the image from the clipboard.</p>
      </div>
    </div>
  );
}

/* ---------- app ---------- */

export default function App() {
  return (
    <div className="relative flex h-[1016px] w-[2473px] overflow-hidden bg-[#1a1016] text-[12px] leading-[16px] font-medium text-[#cccccc] [font-family:Roboto,sans-serif]">
      <div className="flex min-w-0 flex-1 flex-col pl-[2px]">
        <div className="-ml-[2px]">
          <TitleBar />
        </div>
        <MenuBar />
        <div className="flex min-h-0 flex-1">
          <div className="flex w-[1741px] shrink-0 flex-col">
            <div className="flex h-[673px] shrink-0">
              <ToolStrip />
              <div className="w-[2px] shrink-0 bg-[#24262b]" />
              <div className="flex min-w-0 flex-1 bg-[#454545] pt-1 pr-1 pb-1 pl-1">
                <Viewport />
              </div>
            </div>
            <OccupancyPanel />
          </div>
          <div className="w-[2px] shrink-0 bg-[#202124]" />
          <div className="flex min-w-0 flex-1 flex-col bg-[#454545]">
            <StagePanel />
            <PropertyPanel />
          </div>
        </div>
      </div>
      <VisualizationWindow />
      <Notification />
    </div>
  );
}
